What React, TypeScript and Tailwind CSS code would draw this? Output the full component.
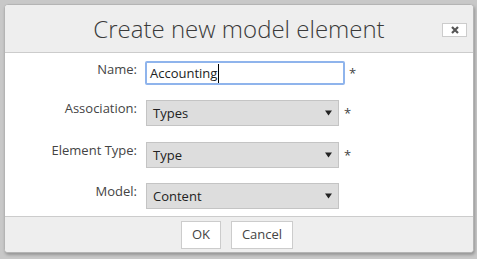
export default function App() {
  const font = { fontFamily: '"Open Sans", "Noto Sans", sans-serif' };

  const Select = ({ value, required }: { value: string; required?: boolean }) => (
    <div className="flex items-center">
      <div className="ml-px flex h-[26px] w-[193px] items-center justify-between border border-[#c4c4c4] bg-[#dddddd] pl-[6px] pr-[5px] text-[13px] leading-[18px] text-[#222]">
        <span>{value}</span>
        <svg width="7" height="6" viewBox="0 0 7 6" className="mr-px">
          <path d="M0 0.5 H7 L3.5 5.5 Z" fill="#222" />
        </svg>
      </div>
      {required && <span className="ml-[5px] text-[13px] leading-[18px] text-[#444]">*</span>}
    </div>
  );

  const Label = ({ children }: { children: React.ReactNode }) => (
    <div className="w-[132px] text-right text-[13px] leading-[16px] text-[#444]">{children}</div>
  );

  return (
    <div className="h-[259px] w-[477px] bg-[#c8c8c8] p-[4px]" style={font}>
      <div className="flex h-[249px] w-[470px] flex-col overflow-hidden rounded-[4px] border border-[#b4b4b4] bg-white shadow-[1px_2px_3px_rgba(0,0,0,0.25)]">
        <div className="relative flex h-[48px] shrink-0 items-center justify-center border-b border-[#cccccc] bg-[#eeeeee]">
          <h1 className="text-[24px] font-light leading-[32px] text-[#3a3a3a]">Create new model element</h1>
          <button className="absolute right-[6px] top-[18px] flex h-[14px] w-[25px] items-center justify-center border border-[#cccccc] bg-white">
            <svg width="8" height="8" viewBox="0 0 8 8">
              <path d="M1 1 L7 7 M7 1 L1 7" stroke="#555" strokeWidth="2.2" />
            </svg>
          </button>
        </div>

        <div className="flex flex-1 flex-col pt-[8px]">
          <div className="flex items-start gap-[8px]">
            <Label>Name:</Label>
            <div className="flex items-center">
              <div className="flex h-[24px] w-[200px] items-center rounded-[2px] border-2 border-[#8fb4ec] pl-[3px] text-[13px] leading-[18px] text-[#222]">
                <span>Accounting</span>
                <span className="ml-px h-[19px] w-px bg-black" />
              </div>
              <span className="ml-[4px] text-[13px] leading-[18px] text-[#444]">*</span>
            </div>
          </div>

          <div className="mt-[15px] flex items-start gap-[8px]">
            <Label>Association:</Label>
            <Select value="Types" required />
          </div>

          <div className="mt-[16px] flex items-start gap-[8px]">
            <Label>Element Type:</Label>
            <Select value="Type" required />
          </div>

          <div className="mt-[15px] flex items-start gap-[8px]">
            <Label>Model:</Label>
            <Select value="Content" />
          </div>
        </div>

        <div className="flex h-[36px] shrink-0 items-start justify-center gap-[10px] border-t border-[#cccccc] bg-[#eeeeee] pt-[4px] pr-[4px]">
          <button className="h-[28px] w-[40px] border border-[#cccccc] bg-white text-[13px] text-[#444]">OK</button>
          <button className="h-[28px] w-[62px] border border-[#cccccc] bg-white text-[13px] text-[#444]">Cancel</button>
        </div>
      </div>
    </div>
  );
}
